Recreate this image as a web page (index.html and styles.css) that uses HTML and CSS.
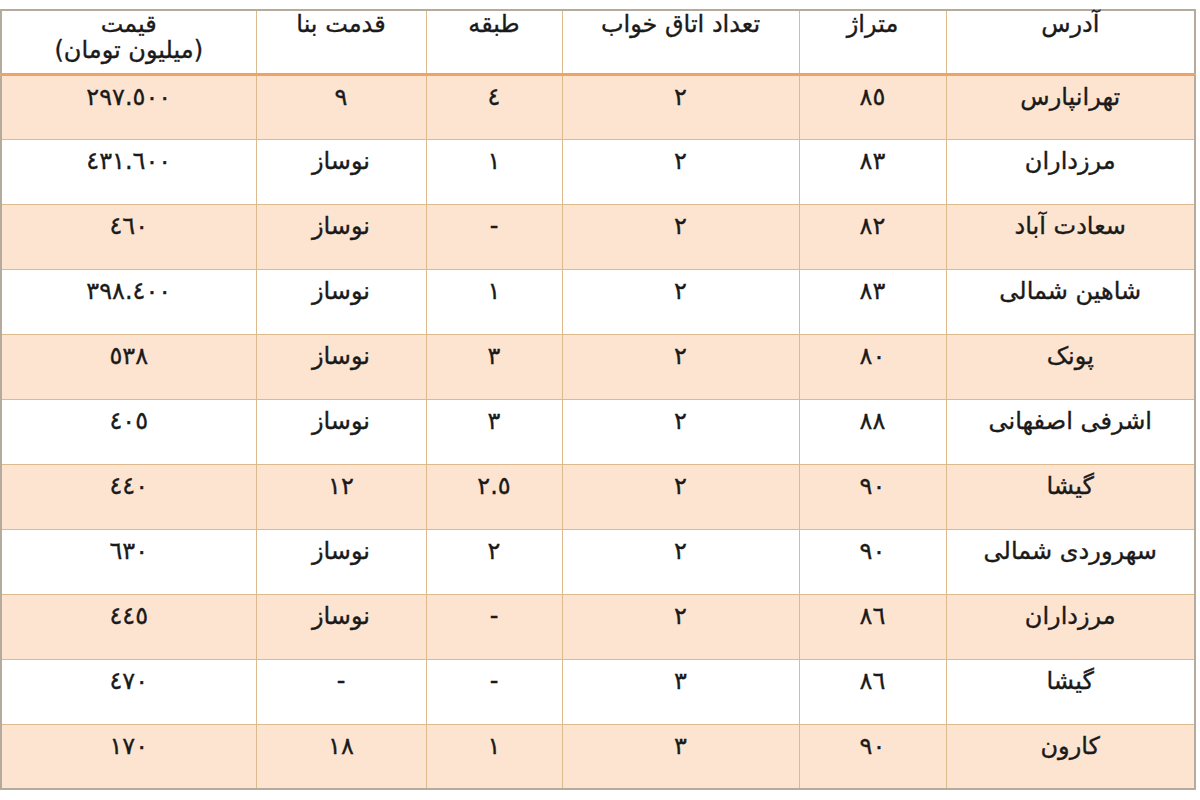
FILE: index.html
```html
<!DOCTYPE html>
<html lang="fa" dir="rtl">
<head>
<meta charset="utf-8">
<link rel="stylesheet" href="styles.css">
</head>
<body>
<table class="grid">
  <colgroup>
    <col class="c-addr"><col class="c-area"><col class="c-rooms"><col class="c-floor"><col class="c-age"><col class="c-price">
  </colgroup>
  <thead>
    <tr class="head">
      <th>آدرس</th>
      <th>متراژ</th>
      <th>تعداد اتاق خواب</th>
      <th>طبقه</th>
      <th>قدمت بنا</th>
      <th>قیمت<br>(میلیون تومان)</th>
    </tr>
  </thead>
  <tbody>
    <tr class="alt"><td>تهرانپارس</td><td>٨٥</td><td>٢</td><td>٤</td><td>٩</td><td>٢٩٧.٥٠٠</td></tr>
    <tr><td>مرزداران</td><td>٨٣</td><td>٢</td><td>١</td><td>نوساز</td><td>٤٣١.٦٠٠</td></tr>
    <tr class="alt"><td>سعادت آباد</td><td>٨٢</td><td>٢</td><td>-</td><td>نوساز</td><td>٤٦٠</td></tr>
    <tr><td>شاهین شمالی</td><td>٨٣</td><td>٢</td><td>١</td><td>نوساز</td><td>٣٩٨.٤٠٠</td></tr>
    <tr class="alt"><td>پونک</td><td>٨٠</td><td>٢</td><td>٣</td><td>نوساز</td><td>٥٣٨</td></tr>
    <tr><td>اشرفی اصفهانی</td><td>٨٨</td><td>٢</td><td>٣</td><td>نوساز</td><td>٤٠٥</td></tr>
    <tr class="alt"><td>گیشا</td><td>٩٠</td><td>٢</td><td>٢.٥</td><td>١٢</td><td>٤٤٠</td></tr>
    <tr><td>سهروردی شمالی</td><td>٩٠</td><td>٢</td><td>٢</td><td>نوساز</td><td>٦٣٠</td></tr>
    <tr class="alt"><td>مرزداران</td><td>٨٦</td><td>٢</td><td>-</td><td>نوساز</td><td>٤٤٥</td></tr>
    <tr><td>گیشا</td><td>٨٦</td><td>٣</td><td>-</td><td>-</td><td>٤٧٠</td></tr>
    <tr class="alt"><td>کارون</td><td>٩٠</td><td>٣</td><td>١</td><td>١٨</td><td>١٧٠</td></tr>
  </tbody>
</table>
</body>
</html>
```
FILE: styles.css
```css
html, body {
  margin: 0;
  padding: 0;
  background: #ffffff;
}
body {
  font-family: "DejaVu Sans", "Noto Sans", sans-serif;
  color: #1a1a1a;
}
.grid {
  margin: 9px 4px 0 3px;
  width: 1194px;
  table-layout: fixed;
  border-collapse: collapse;
  border: 2px solid #b5ab9c;
}
.c-addr { width: 249px; }
.c-area { width: 147px; }
.c-rooms { width: 237px; }
.c-floor { width: 136px; }
.c-age { width: 170px; }
.c-price { width: 255px; }
.grid th, .grid td {
  border: 1px solid #ddb98e;
  text-align: center;
  vertical-align: top;
  font-size: 24px;
  font-weight: normal;
  -webkit-text-stroke: 0.35px #1a1a1a;
}
.grid td {
  height: 65px;
  padding: 7px 4px 0;
  line-height: 28px;
  box-sizing: border-box;
}
.grid th {
  height: 64px;
  padding: 0 4px 0;
  line-height: 26px;
  box-sizing: border-box;
  background: #ffffff;
}
.grid .head th {
  border-bottom: 3px solid #f0a362;
}
.grid .alt td {
  background: #fde4d1;
}
.grid tr:last-child td {
  border-bottom: 2px solid #b5ab9c;
}
```
